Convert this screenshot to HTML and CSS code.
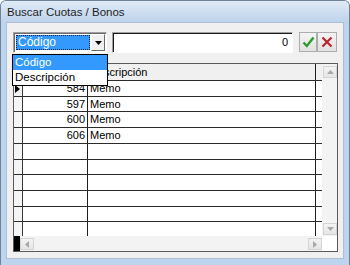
FILE: index.html
```html
<!DOCTYPE html>
<html>
<head>
<meta charset="utf-8">
<link rel="stylesheet" href="styles.css">
</head>
<body>
<div class="window">
  <div class="titlebar">Buscar Cuotas / Bonos</div>
  <div class="client">
    <div class="toolbar">
      <div class="combo">
        <div class="combo-field"><span class="combo-sel">Código</span></div>
        <div class="combo-btn"><svg width="7" height="4" viewBox="0 0 7 4"><path d="M0 0h7L3.5 4z" fill="#000"/></svg></div>
      </div>
      <div class="edit">0</div>
      <div class="tbtn ok"><svg width="13" height="12" viewBox="0 0 13 12"><path d="M1.5 6.5L4.8 10 11.5 1.5" fill="none" stroke="#2f9a2f" stroke-width="2.4"/></svg></div>
      <div class="tbtn cancel"><svg width="12" height="12" viewBox="0 0 12 12"><path d="M1.5 1.5L10.5 10.5M10.5 1.5L1.5 10.5" fill="none" stroke="#b8262a" stroke-width="2.2"/></svg></div>
    </div>
    <div class="grid">
      <div class="grid-body">
        <div class="table">
          <div class="row head h17"><div class="c ind"></div><div class="c code"></div><div class="c desc">Descripción</div><div class="c fill"></div></div>
          <div class="row h16"><div class="c ind"><svg width="5" height="8" viewBox="0 0 5 8"><path d="M0 0L5 4 0 8z" fill="#000"/></svg></div><div class="c code">584</div><div class="c desc">Memo</div><div class="c fill"></div></div>
          <div class="row h15"><div class="c ind"></div><div class="c code">597</div><div class="c desc">Memo</div><div class="c fill"></div></div>
          <div class="row h16"><div class="c ind"></div><div class="c code">600</div><div class="c desc">Memo</div><div class="c fill"></div></div>
          <div class="row h16"><div class="c ind"></div><div class="c code">606</div><div class="c desc">Memo</div><div class="c fill"></div></div>
          <div class="row h16"><div class="c ind"></div><div class="c code"></div><div class="c desc"></div><div class="c fill"></div></div>
          <div class="row h15"><div class="c ind"></div><div class="c code"></div><div class="c desc"></div><div class="c fill"></div></div>
          <div class="row h16"><div class="c ind"></div><div class="c code"></div><div class="c desc"></div><div class="c fill"></div></div>
          <div class="row h16"><div class="c ind"></div><div class="c code"></div><div class="c desc"></div><div class="c fill"></div></div>
          <div class="row h15"><div class="c ind"></div><div class="c code"></div><div class="c desc"></div><div class="c fill"></div></div>
          <div class="row last"><div class="c ind"></div><div class="c code"></div><div class="c desc"></div><div class="c fill"></div></div>
        </div>
        <div class="vscroll">
          <div class="sbtn vbtn"><svg width="7" height="4" viewBox="0 0 7 4"><path d="M0 4h7L3.5 0z" fill="#a8a8a8"/></svg></div>
          <div class="vtrack"></div>
          <div class="sbtn vbtn"><svg width="7" height="4" viewBox="0 0 7 4"><path d="M0 0h7L3.5 4z" fill="#a8a8a8"/></svg></div>
        </div>
      </div>
      <div class="hscroll">
        <div class="hblack"></div>
        <div class="sbtn hbtn"><svg width="4" height="7" viewBox="0 0 4 7"><path d="M4 0v7L0 3.5z" fill="#a8a8a8"/></svg></div>
        <div class="htrack"></div>
        <div class="sbtn hbtn"><svg width="4" height="7" viewBox="0 0 4 7"><path d="M0 0v7L4 3.5z" fill="#a8a8a8"/></svg></div>
        <div class="hcorner"></div>
      </div>
    </div>
    <div class="dropdown">
      <div class="item sel">Código</div>
      <div class="item">Descripción</div>
    </div>
  </div>
</div>
</body>
</html>
```
FILE: styles.css
```css
* { box-sizing: border-box; }
html, body { margin: 0; padding: 0; }
body {
  width: 350px; height: 265px; overflow: hidden;
  font-family: "Liberation Sans", Arial, sans-serif;
  font-size: 11px; color: #000;
}
.window {
  width: 350px; height: 265px;
  background: #bcd4ee;
  border: 1px solid #6f8297;
  border-bottom: none;
  border-radius: 6px 6px 0 0;
  display: flex; flex-direction: column;
}
.titlebar {
  height: 21px;
  padding-left: 6px;
  line-height: 22px;
  font-size: 11.5px;
  color: #1e1e1e;
  background: linear-gradient(#e0eaf6, #bed3ec);
  border-radius: 5px 5px 0 0;
}
.client {
  position: relative;
  margin: 0 5px 6px 5px;
  flex: 1;
  background: #f0f0f0;
  border: 1px solid #aebfd4;
  padding: 9px 0 0 6px;
}
.toolbar { display: flex; align-items: flex-start; height: 21px; }
.combo {
  width: 94px; height: 21px;
  display: flex;
  background: #fff;
  border: 1px solid #a0a0a0;
  border-right-color: #fff; border-bottom-color: #fff;
  box-shadow: inset 1px 1px 0 #696969;
  padding: 2px 1px 1px 2px;
}
.combo-field { flex: 1; padding: 0 1px 0 0; }
.combo-sel {
  display: block; height: 15px;
  background: #3399ff; color: #fff;
  border: 1px dotted #1c2440;
  font-size: 12px; line-height: 13px;
  padding-left: 1px;
}
.combo-btn {
  width: 14px; height: 17px;
  background: #f0f0f0;
  border: 1px solid #fff;
  border-right-color: #696969; border-bottom-color: #696969;
  display: flex; align-items: center; justify-content: center;
  margin-top: -1px;
}
.edit {
  margin-left: 5px;
  width: 181px; height: 21px;
  background: #fff;
  border: 1px solid #a0a0a0;
  border-right-color: #fff; border-bottom-color: #fff;
  box-shadow: inset 1px 1px 0 #1a1a1a;
  text-align: right;
  padding-right: 4px;
  line-height: 19px;
  font-size: 11px;
}
.tbtn {
  height: 20px;
  background: linear-gradient(#f4f4f4, #e1e1e1);
  border: 1px solid #acacac;
  display: flex; align-items: center; justify-content: center;
}
.ok { margin-left: 6px; width: 18px; }
.cancel { margin-left: 0; width: 20px; }
.grid {
  margin-top: 10px;
  width: 325px; height: 189px;
  border: 1px solid #5a5a5a;
  background: #fff;
  display: flex; flex-direction: column;
}
.grid-body { display: flex; height: 172px; }
.table { width: 308px; display: flex; flex-direction: column; }
.row { display: flex; border-bottom: 1px solid #2b2b2b; }
.row.h17 { height: 17px; }
.row.h16 { height: 16px; }
.row.h15 { height: 15px; }
.row.last { height: 14px; border-bottom: none; }
.c { height: 100%; white-space: nowrap; overflow: hidden; line-height: 15px; }
.ind {
  width: 9px; background: #f4f4f4;
  border-right: 1px solid #3a3a3a;
  display: flex; align-items: center; padding-left: 1px;
}
.code { width: 65px; border-right: 1px solid #1e1e1e; text-align: right; padding-right: 2px; }
.desc { width: 228px; border-right: 1px solid #1e1e1e; padding-left: 2px; }
.fill { width: 6px; }
.head { background: #f0f0f0; }
.head .c { line-height: 16px; }
.vscroll {
  width: 15px;
  background: #f3f3f3;
  display: flex; flex-direction: column;
  padding: 2px 0 1px 1px;
}
.vtrack { flex: 1; }
.sbtn {
  background: linear-gradient(#f3f3f3, #e6e6e6);
  border: 1px solid #d4d4d4;
  display: flex; align-items: center; justify-content: center;
}
.vbtn { width: 14px; height: 12px; }
.hscroll { display: flex; height: 15px; background: #f3f3f3; }
.hblack { width: 6px; background: #000; }
.hbtn { width: 14px; height: 12px; margin-top: 2px; }
.htrack { flex: 1; }
.hcorner { width: 15px; background: #fff; }
.dropdown {
  position: absolute;
  left: 5px; top: 31px;
  width: 96px; height: 32px;
  background: #fff;
  border: 1px solid #000;
}
.item { height: 15px; line-height: 15px; padding-left: 2px; font-size: 11.5px; }
.item.sel { background: #3399ff; color: #fff; }
```
